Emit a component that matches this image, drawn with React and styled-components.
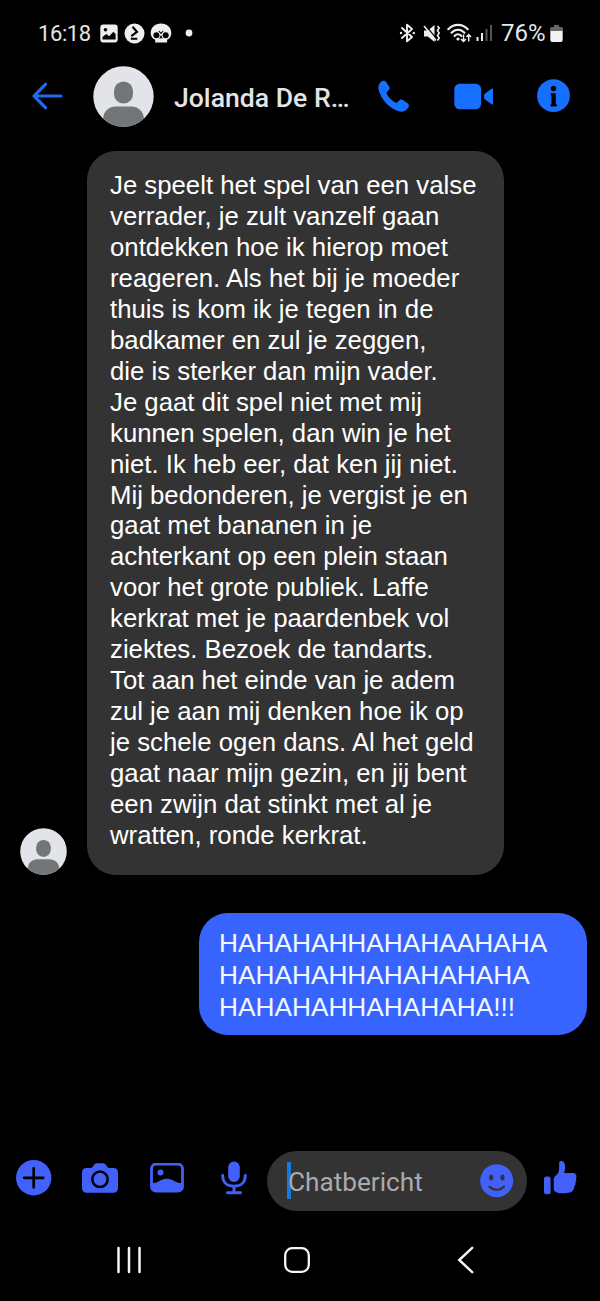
import React from 'react';
import styled, { createGlobalStyle } from 'styled-components';

const INCOMING = [
    'Je speelt het spel van een valse',
    'verrader, je zult vanzelf gaan',
    'ontdekken hoe ik hierop moet',
    'reageren. Als het bij je moeder',
    'thuis is kom ik je tegen in de',
    'badkamer en zul je zeggen,',
    'die is sterker dan mijn vader.',
    'Je gaat dit spel niet met mij',
    'kunnen spelen, dan win je het',
    'niet. Ik heb eer, dat ken jij niet.',
    'Mij bedonderen, je vergist je en',
    'gaat met bananen in je',
    'achterkant op een plein staan',
    'voor het grote publiek. Laffe',
    'kerkrat met je paardenbek vol',
    'ziektes. Bezoek de tandarts.',
    'Tot aan het einde van je adem',
    'zul je aan mij denken hoe ik op',
    'je schele ogen dans. Al het geld',
    'gaat naar mijn gezin, en jij bent',
    'een zwijn dat stinkt met al je',
    'wratten, ronde kerkrat.',
];

const OUTGOING = ['HAHAHAHHAHAHAAHAHA', 'HAHAHAHHAHAHAHAHA', 'HAHAHAHHAHAHAHA!!!'];

function Avatar({ size }) {
    return (
        <AvatarSvg width={size} height={size} viewBox="0 0 61 61">
            <defs>
                <clipPath id={`avatar-${size}`}>
                    <circle cx="30.5" cy="30.5" r="30.2" />
                </clipPath>
            </defs>
            <g clipPath={`url(#avatar-${size})`}>
                <rect width="61" height="61" fill="#e2e4e9" />
                <rect x="21" y="15.5" width="19" height="22" rx="9.5" fill="#737679" />
                <path d="M10 61V54C10 45 16 40.5 23 40.5H38C45 40.5 51 45 51 54V61Z" fill="#737679" />
            </g>
        </AvatarSvg>
    );
}

function StatusBar() {
    return (
        <Status>
            <Clock>16:18</Clock>
            <Icon $left={10} width="18" height="19" viewBox="0 0 18 19">
                <rect x=".3" y=".5" width="17.4" height="18" rx="3" fill="#eee" />
                <circle cx="5.5" cy="5.7" r="1.8" fill="#000" />
                <path d="M2.5 15.5V13L6.2 10l3 2.2 4.2-4.4 2.2 2.3v5.4z" fill="#000" />
            </Icon>
            <Icon $left={6} width="21" height="21" viewBox="0 0 21 21">
                <circle cx="10.5" cy="10.5" r="10" fill="#eee" />
                <path d="M8.5 3.8L13 8.8 7.3 13.2M6.8 15.8h6.5" fill="none" stroke="#000" strokeWidth="2.1" />
            </Icon>
            <Icon $left={5} width="22" height="21" viewBox="0 0 22 21">
                <path d="M11 .5C17 .5 21.3 4.6 21.3 10c0 3.3-1.6 5.6-4.2 6.7v2.8H5.2v-2.8C2.5 15.6.7 13.3.7 10 .7 4.6 5 .5 11 .5z" fill="#eee" />
                <circle cx="6.4" cy="12.300" r="3" fill="#000" />
                <circle cx="15.700" cy="12.300" r="3" fill="#000" />
                <path d="M8.800 8l2.200 2.400L13.200 8M9.800 15.500l1.200-2.300 1.200 2.300" fill="none" stroke="#000" strokeWidth="1.100" />
            </Icon>
            <Icon $left={13} width="8" height="8" viewBox="0 0 8 8">
                <circle cx="4" cy="4" r="3.400" fill="#eee" />
            </Icon>
            <Spacer />
            <Icon width="17" height="20" viewBox="0 0 17 20">
                <path d="M3 5l10 9-5 4.300V1.700L13 6 3 15" fill="none" stroke="#eee" strokeWidth="1.900" strokeLinejoin="round" strokeLinecap="round" />
                <circle cx="2" cy="10" r="1.200" fill="#eee" />
                <circle cx="14.800" cy="10" r="1.200" fill="#eee" />
            </Icon>
            <Icon $left={7} width="18" height="19" viewBox="0 0 18 19">
                <path d="M1 6.500h3.800L11.500 1v17L4.800 12.500H1z" fill="#eee" />
                <path d="M2.200 .8l11 13.500" stroke="#000" strokeWidth="1.300" />
                <path d="M1 2l12 14.500" stroke="#eee" strokeWidth="1.600" />
                <path d="M14.500 2l1.700 2-1.700 2.500L16.200 9l-1.700 2.500 1.700 2.500-1.700 2.500" fill="none" stroke="#eee" strokeWidth="1.600" />
            </Icon>
            <Icon $left={6} width="25" height="20" viewBox="0 0 25 20">
                <g fill="none" stroke="#eee" strokeWidth="2.100" strokeLinecap="round">
                    <path d="M1.300 6.200C6.500.4 15.500.4 20.700 6.200" />
                    <path d="M4.500 9.700c3.700-4 9.300-4 13 0" />
                    <path d="M7.600 12.900c2-2 4.800-2 6.800 0" />
                </g>
                <circle cx="11" cy="16" r="1.600" fill="#eee" />
                <path d="M16.500 11.500v7M14 16l2.500 2.500L19 16M21.700 18.500v-7M19.500 14l2.200-2.500L24 14" fill="none" stroke="#eee" strokeWidth="1.500" />
            </Icon>
            <Icon $left={4} width="17" height="18" viewBox="0 0 17 18">
                <rect x=".5" y="13" width="2" height="4" fill="#eee" />
                <rect x="5" y="9" width="2" height="8" fill="#eee" />
                <rect x="9.500" y="5" width="2" height="12" fill="#555" />
                <rect x="14" y="1" width="2" height="16" fill="#555" />
            </Icon>
            <Battery>76%</Battery>
            <Icon $left={3} width="13" height="19" viewBox="0 0 13 19">
                <path d="M4 1h5v2h2a2 2 0 0 1 2 2v2H0V5a2 2 0 0 1 2-2h2z" fill="#666" />
                <path d="M.3 7h12.400v9a2 2 0 0 1-2 2H2.300a2 2 0 0 1-2-2z" fill="#f2f2f2" />
            </Icon>
        </Status>
    );
}

function ChatHeader() {
    return (
        <Header>
            <Icon width="31" height="28" viewBox="0 0 31 28">
                <path d="M13.500 2.300L2 14l11.500 11.700M2 14h27" fill="none" stroke="#1b6dee" strokeWidth="3.200" strokeLinecap="round" strokeLinejoin="round" />
            </Icon>
            <AvatarSlot>
                <Avatar size={61} />
            </AvatarSlot>
            <Name>Jolanda De R…</Name>
            <Icon width="32" height="33" viewBox="0 0 32 33">
                <path d="M3.400 1.500C5 .3 7 .4 8.100 2l3 4.400c.9 1.400.6 2.700-.5 3.900L9 12c-.5.600-.6 1.200-.2 1.900 2.200 3.800 5 6.500 8.700 8.600.7.400 1.300.3 1.800-.2l1.800-1.800c1.100-1.100 2.500-1.300 3.800-.4l4.700 3.200c1.600 1.100 1.700 3.100.4 4.600l-1.400 1.600c-1.800 2-4.500 2.700-7.700 1.700C11.500 28.500 3.500 20 .8 10.500-.2 7 .4 4 3.400 1.500z" fill="#176fff" />
            </Icon>
            <Icon $left={44} width="40" height="27" viewBox="0 0 40 27">
                <rect x=".3" y=".7" width="26.800" height="25.600" rx="5.500" fill="#176fff" />
                <path d="M31 10.500l6.500-4.800c.8-.6 1.500-.2 1.500.7v14.200c0 .9-.7 1.300-1.500.7L31 16.500c-1.300-1-1.300-5 0-6z" fill="#176fff" />
            </Icon>
            <Icon $left={43} width="34" height="34" viewBox="0 0 34 34">
                <circle cx="16.500" cy="16.700" r="16.400" fill="#176fff" />
                <circle cx="16.500" cy="9.500" r="2.700" fill="#000" />
                <path d="M14 14.500h4.600v11h1v1.700h-5.800v-1.700h.9v-9.200H14z" fill="#000" stroke="#000" strokeWidth=".4" />
            </Icon>
        </Header>
    );
}

function Composer() {
    return (
        <ComposerRow>
            <Icon width="36" height="36" viewBox="0 0 36 36">
                <circle cx="17.700" cy="17.700" r="17.700" fill="#4261fb" />
                <path d="M17.700 8.300v19M8.200 17.800h19" stroke="#000" strokeWidth="2.700" strokeLinecap="round" />
            </Icon>
            <Icon $left={30} width="36" height="30" viewBox="0 0 36 30">
                <path d="M4.500 5h4.300c1 0 1.600-.5 2.200-1.400l1-1.600C12.800.8 13.800.2 15 .2h6c1.200 0 2.200.6 3 1.800l1 1.600C25.600 4.500 26.200 5 27.200 5h4.300C34.300 5 36 6.700 36 9.300v15.900c0 2.600-1.900 4.500-4.500 4.500h-27C1.900 29.700 0 27.800 0 25.200V9.300C0 6.700 1.700 5 4.500 5z" fill="#4261fb" />
                <circle cx="18" cy="16.300" r="7.700" fill="none" stroke="#000" strokeWidth="2.500" />
            </Icon>
            <Icon $left={32} width="34" height="30" viewBox="0 0 34 30">
                <rect x="1.500" y="1.200" width="31" height="27" rx="4.500" fill="none" stroke="#4261fb" strokeWidth="2.800" />
                <circle cx="10.500" cy="9.500" r="3" fill="#4261fb" />
                <path d="M2 20c3.500.3 5.500-1 8.500-2.800 3.500-2.100 9-2.100 12.500 0 3.500 2.100 5.500 3.100 9.500 2.800v5c0 2-1.500 3.500-3.500 3.500H5.500C3.500 28.500 2 27 2 25z" fill="#4261fb" />
            </Icon>
            <Icon $left={37} width="26" height="34" viewBox="0 0 26 34">
                <rect x="7.200" y=".5" width="11.600" height="20.500" rx="5.800" fill="#4261fb" />
                <path d="M1.700 14.500C1.700 21.500 6.500 25.300 13 25.300s11.300-3.800 11.300-10.800M13 25.500V31M6.500 31.800h13" fill="none" stroke="#4261fb" strokeWidth="2.900" strokeLinecap="round" />
            </Icon>
            <Field>
                <Caret />
                <Placeholder>Chatbericht</Placeholder>
                <Icon width="34" height="34" viewBox="0 0 34 34">
                    <circle cx="16.700" cy="16.700" r="16.500" fill="#4261fb" />
                    <ellipse cx="11.200" cy="13.500" rx="2.100" ry="2.900" fill="#333" />
                    <ellipse cx="22.500" cy="13.500" rx="2.100" ry="2.900" fill="#333" />
                    <path d="M9.400 22.500c3.800 4.300 10.800 4.300 14.600 0" fill="none" stroke="#333" strokeWidth="2.100" strokeLinecap="round" />
                </Icon>
            </Field>
            <Icon $left={17} width="33" height="35" viewBox="0 0 33 35">
                <rect x="0" y="15.500" width="6.600" height="17.800" rx="2.500" fill="#4261fb" />
                <path d="M9.700 18.500c0-1.500.6-2.600 1.700-3.500 2.400-2 3.500-4 3.700-6.800V2.500C15.100.8 16 0 17.300 0c2.300 0 3.800 2.400 3.800 5.700 0 2.400-.4 4.300-1 6.300h8.400c2.300 0 4 1.500 4 3.400 0 .9-.3 1.500-.7 2 .4.500.6 1.200.5 2-.1.900-.4 1.500-.9 1.900.3.600.3 1.300.1 2-.2.800-.6 1.300-1.200 1.700.1.700 0 1.400-.2 2.100-1 3.700-3.600 5.100-9.400 5.100-3.300 0-5.800-.2-7.800-.8-2.400-.7-3.200-2-3.200-4.200z" fill="#4261fb" />
            </Icon>
        </ComposerRow>
    );
}

export default function App() {
    return (
        <>
            <GlobalStyle />
            <Phone>
                <StatusBar />
                <ChatHeader />
                <Messages>
                    <IncomingRow>
                        <Avatar size={47} />
                        <IncomingBubble>
                            {INCOMING.map((line) => (
                                <Line key={line}>{line}</Line>
                            ))}
                        </IncomingBubble>
                    </IncomingRow>
                    <OutgoingBubble>
                        {OUTGOING.map((line) => (
                            <Line key={line}>{line}</Line>
                        ))}
                    </OutgoingBubble>
                </Messages>
                <Composer />
                <NavBar>
                    <Icon width="26" height="28" viewBox="0 0 26 28">
                        <path d="M2.500 2v24M13 2v24M23.500 2v24" stroke="#f5f5f5" strokeWidth="2.500" strokeLinecap="round" />
                    </Icon>
                    <Icon $left={141} width="28" height="28" viewBox="0 0 28 28">
                        <rect x="2.200" y="2.200" width="23.600" height="23.600" rx="7" fill="none" stroke="#f5f5f5" strokeWidth="2.300" />
                    </Icon>
                    <Icon $left={146} width="18" height="28" viewBox="0 0 18 28">
                        <path d="M15.200 1.800L2.200 14l13 12.200" fill="none" stroke="#f5f5f5" strokeWidth="2.400" strokeLinecap="round" />
                    </Icon>
                </NavBar>
            </Phone>
        </>
    );
}

const GlobalStyle = createGlobalStyle`
  * {
    box-sizing: border-box;
  }
  body {
    margin: 0;
    background: #000;
  }
`;

const Phone = styled.div`
  display: flex;
  flex-direction: column;
  width: 600px;
  height: 1301px;
  background: #000;
  font-family: Roboto, sans-serif;
  overflow: hidden;
`;

const Icon = styled.svg`
  display: block;
  flex-shrink: 0;
  margin-left: ${({ $left }) => $left || 0}px;
`;

const AvatarSvg = styled.svg`
  display: block;
  flex-shrink: 0;
`;

const Status = styled.div`
  display: flex;
  align-items: center;
  height: 66px;
  padding: 0 37px 0 38px;
`;

const Clock = styled.span`
  width: 52px;
  color: #e4e4e4;
  font-size: 22px;
  letter-spacing: -0.4px;
  white-space: nowrap;
`;

const Battery = styled.span`
  width: 46px;
  margin-left: 8px;
  color: #e8e8e8;
  font-size: 24px;
  letter-spacing: 0;
  white-space: nowrap;
`;

const Spacer = styled.div`
  flex: 1;
`;

const Header = styled.header`
  display: flex;
  align-items: center;
  height: 60px;
  padding-left: 32px;
`;

const AvatarSlot = styled.div`
  margin-left: 30px;
`;

const Name = styled.h1`
  width: 204px;
  margin: 2px 0 0 20px;
  color: #e3e4e8;
  font-size: 26.6px;
  font-weight: 500;
  white-space: nowrap;
`;

const Messages = styled.main`
  display: flex;
  flex-direction: column;
  height: 1019px;
  padding: 25px 13px 0 20px;
`;

const IncomingRow = styled.div`
  display: flex;
  align-items: flex-end;
  gap: 20px;
`;

const IncomingBubble = styled.div`
  width: 417px;
  height: 724px;
  padding: 19px 0 0 23px;
  border-radius: 29px;
  background: #333;
  color: #fff;
  font-family: 'Liberation Sans', Arial, sans-serif;
  font-size: 25.75px;
  line-height: 30.95px;
`;

const OutgoingBubble = styled.div`
  align-self: flex-end;
  width: 388px;
  height: 122px;
  margin-top: 38px;
  padding: 15px 0 0 20px;
  border-radius: 29px;
  background: #3764ff;
  color: #f4f7ff;
  font-family: 'Liberation Sans', Arial, sans-serif;
  font-size: 26.25px;
  line-height: 31.8px;
`;

const Line = styled.div`
  white-space: nowrap;
`;

const ComposerRow = styled.div`
  display: flex;
  align-items: center;
  height: 66px;
  padding-left: 16px;
`;

const Field = styled.div`
  display: flex;
  align-items: center;
  width: 260px;
  height: 60px;
  margin: 6px 0 0 20px;
  padding: 0 13px 0 20px;
  border-radius: 30px;
  background: #333;
`;

const Caret = styled.span`
  width: 4px;
  height: 37px;
  margin-top: -1px;
  background: #1877e0;
`;

const Placeholder = styled.span`
  flex: 1;
  margin: 2px 0 0 -3px;
  color: #a9abae;
  font-size: 26.2px;
`;

const NavBar = styled.nav`
  display: flex;
  align-items: flex-start;
  padding: 35px 0 0 116px;
`;
